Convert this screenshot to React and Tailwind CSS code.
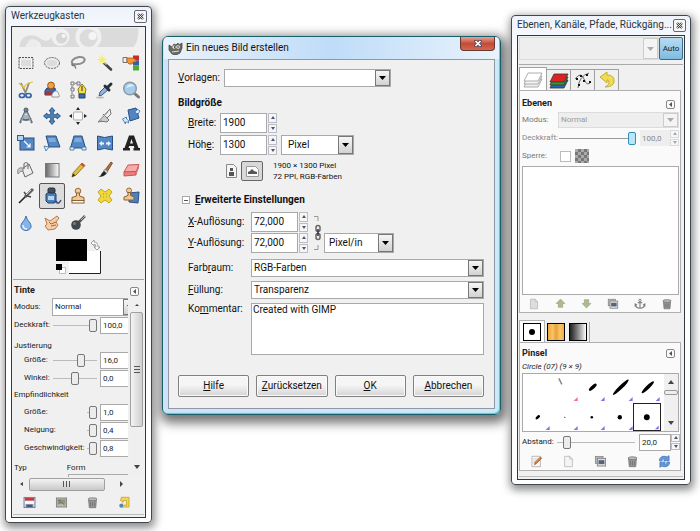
import React from "react";

function Svg({ children, size = 20, className = "" }) {
  return (
    <svg width={size} height={size} viewBox="0 0 20 20" className={className} aria-hidden="true">
      {children}
    </svg>
  );
}

const tools = [
  ["Rechteckige Auswahl", <><rect x="3" y="4.500" width="14" height="11" fill="#dcdcdc" stroke="#555" strokeDasharray="2 1" /><rect x="4.500" y="6" width="11" height="8" fill="none" stroke="#f8f8f8" /></>],
  ["Elliptische Auswahl", <><ellipse cx="10" cy="10" rx="7.500" ry="5.500" fill="#dcdcdc" stroke="#666" strokeDasharray="2 1" /><ellipse cx="10" cy="10" rx="6" ry="4" fill="none" stroke="#f6f6f6" /></>],
  ["Freie Auswahl", <><path d="M5 11C2 9 5 5 11 4c6-.500 7 3 4 5.500-3 2-7 2-10 1.500z" fill="none" stroke="#8c8c8c" strokeWidth="2" /><path d="M5 11c-2 .500-1 2 1 1.500 1-.500 1 2 2 3" fill="none" stroke="#777" strokeWidth="1.300" /></>],
  ["Zauberstab", <><path d="M9 10l7 6.500" stroke="#444" strokeWidth="2.600" strokeLinecap="round" /><path d="M9.500 9.500l2 2" stroke="#ccc" strokeWidth="1.500" /><circle cx="7" cy="7" r="3.500" fill="#f8f7a0" /><path d="M7 2v9M2.500 6.500h9M4 3.500l6 6M10 3.500l-6 6" stroke="#efe95a" strokeWidth=".8" /></>],
  ["Nach Farbe auswählen", <><rect x="12" y="2.500" width="6" height="5" fill="#ce2929" /><rect x="12" y="7.500" width="6" height="5" fill="#315fae" /><rect x="12" y="12.500" width="6" height="5" fill="#4cad32" /><path d="M2 4.500h4v5H2z" fill="#eee" stroke="#555" strokeWidth=".8" /><path d="M6 5h6l3 2v2h-3l-1 2H8L6 9z" fill="#f39637" stroke="#b55a12" strokeWidth=".8" /></>],
  ["Schere", <><path d="M5 3l5 11M13 3l-4 11" stroke="#8b8b80" strokeWidth="1.800" /><path d="M3 3q3 3 5 5 1-5 9-6" fill="none" stroke="#e1bd3b" strokeWidth="1.200" /><ellipse cx="6" cy="15.500" rx="2.600" ry="2" fill="none" stroke="#3765a5" strokeWidth="1.700" /><ellipse cx="12.500" cy="15.500" rx="2.600" ry="2" fill="none" stroke="#3765a5" strokeWidth="1.700" /></>],
  ["Vordergrundauswahl", <><path d="M5 8h8l1 7H3q-1-5 2-7z" fill="#3d65ad" stroke="#283f70" /><circle cx="9" cy="5.500" r="3.400" fill="#eea04a" stroke="#9a5511" /><path d="M4 12h6v3H4z" fill="#a23535" /><path d="M10 17c-1-3 3-7 5-6 1 2 3 4 2 6z" fill="#f3f3f3" stroke="#999" /></>],
  ["Pfade", <><path d="M4 3v14M4 4l5-1" stroke="#777" strokeDasharray="2 1" /><path d="M3 2h3v3H3zM3 8h3v3H3zM3 15h3v3H3zM9 2h3v3H9z" fill="#eee" stroke="#777" /><path d="M11 14l-1-5 4-5 4 5-1 5z" fill="#f4df42" stroke="#8d7718" /><path d="M14 6v5" stroke="#333" /><path d="M11 14h6v4h-6z" fill="#3f6cae" stroke="#26436f" /></>],
  ["Farbpipette", <><path d="M4 16l1-4 6-6 3 3-7 6z" fill="#8eb4df" stroke="#3f5b7b" /><path d="M10 6l4 4M12 8l4-4" stroke="#26313b" strokeWidth="3" strokeLinecap="round" /><ellipse cx="5" cy="17.500" rx="4" ry="1" fill="#bbb" /></>],
  ["Vergrößerung", <><path d="M13 13l4.500 4" stroke="#777" strokeWidth="3" strokeLinecap="round" /><circle cx="9" cy="8.500" r="6.300" fill="#a7cceb" stroke="#8a9aaa" strokeWidth="1.500" /><path d="M5 8c1-4 6-5 8-2-3 0-5 1-8 2z" fill="#dceefb" /></>],
  ["Maßband", <><path d="M10 4L4 17M10 4l6 13M5 12q5 4 10 0" fill="none" stroke="#5f6d79" strokeWidth="2" /><path d="M10 5L5 16M10 5l5 11" stroke="#c6d0d8" strokeWidth=".7" /><circle cx="10" cy="4" r="2" fill="#748594" stroke="#4a5864" /><path d="M8 9h4v4H8z" fill="#a8b5bf" /></>],
  ["Verschieben", <path d="M10 1.500l3 3.500h-1.700v3.700H15V7l3.500 3-3.500 3v-1.700h-3.700V15H13l-3 3.500L7 15h1.700v-3.700H5V13l-3.500-3L5 7v1.700h3.700V5H7z" fill="#5083bd" stroke="#285384" strokeWidth=".9" />],
  ["Ausrichten", <><rect x="5.500" y="6" width="9" height="8" rx="1" fill="#f8f8f8" stroke="#aaa" /><path d="M10 1l2 3H8zM10 19l2-3H8zM1 10l3-2v4zM19 10l-3-2v4z" fill="#222" /></>],
  ["Zuschneiden", <><path d="M3 16L15 3l1 5-7 7z" fill="#eee" stroke="#777" /><path d="M8 8l6 6-2 2-7-1" fill="#ccc" stroke="#777" /><path d="M4 15l9-9" stroke="#999" /></>],
  ["Drehen", <><path d="M7 4l8-2 3 10-9 3z" fill="#4f86c3" stroke="#285080" /><path d="M1.500 13l4-2v2q3 1 2 4-1-1.500-3-1v2z" fill="#d9ebfb" stroke="#366da8" strokeWidth=".8" /><path d="M19 5l-3-2v1q-3 1-1 4l1-1 1 1z" fill="#d9ebfb" stroke="#366da8" strokeWidth=".8" /></>],
  ["Skalieren", <><rect x="4" y="5" width="14" height="12" fill="#5489c5" stroke="#285080" /><rect x="1.500" y="2.500" width="6" height="5" fill="#b8d5ef" stroke="#2c5f9b" /><path d="M8 8l6 6m0-3.500V14h-3.500" fill="none" stroke="#fff" strokeWidth="1.200" /></>],
  ["Scheren", <><path d="M4 3h10l4 11H7z" fill="#5489c5" stroke="#285080" /><path d="M6 5h7l1 4H7z" fill="#7fabdc" /><path d="M2 13l5 1-3 4z" fill="#d9ebfb" stroke="#366da8" strokeWidth=".8" /></>],
  ["Perspektive", <><path d="M6 3h8l3.500 12h-15z" fill="#5489c5" stroke="#285080" /><path d="M7 5h6l1 4H6z" fill="#7fabdc" /><path d="M2 14h4v3H2zM14 14h4v3h-4z" fill="#d9ebfb" stroke="#366da8" strokeWidth=".8" /></>],
  ["Spiegeln", <><path d="M2.500 3l7 1.500 8-1.500v14l-8-1.500-7 1.500z" fill="#5489c5" stroke="#285080" /><path d="M4 10.500l3-2.500v1.500h2v2H7V13zM16 10.500L13 8v1.500h-2v2h2V13z" fill="#e7f3ff" /></>],
  ["Text", <path fillRule="evenodd" d="M8 2.500h5L17.500 15H19v2.500h-6.500V15h1l-.7-2H8.200l-.7 2h1.500v2.500H2V15h1.500zM10.500 6L9 10.500h3z" fill="#222" />],
  ["Füllen", <><path d="M6 9l7-5 4 9-8 4z" fill="#eee" stroke="#666" /><path d="M8 9V4q2-3 4 0v5" fill="none" stroke="#777" strokeWidth="1.200" /><path d="M7 8C2 7 1 10 2 14q1-3 5-3z" fill="#c9c9c9" stroke="#777" strokeWidth=".8" /></>],
  ["Farbverlauf", <><defs><linearGradient id="toolGrad"><stop stopColor="#666" /><stop offset="1" stopColor="#fff" /></linearGradient></defs><rect x="3.500" y="3.500" width="13.500" height="13.500" fill="url(#toolGrad)" stroke="#777" /></>],
  ["Stift", <><path d="M4 17l1-4L14 3l3 2.500L8 15z" fill="#e2bf3b" stroke="#806626" strokeWidth=".8" /><path d="M14 3l3 2.500-1.500 1.600-3-2.500z" fill="#d9463b" /><path d="M4 17l1-3.500 2.500 2z" fill="#3a2a18" /></>],
  ["Pinsel", <><path d="M10 10l6-8 1.500 1L12 12z" fill="#b5713a" stroke="#6b3f1b" strokeWidth=".8" /><path d="M8.500 11l3 2.500 1.500-2-3-2.500z" fill="#ccc" stroke="#666" strokeWidth=".6" /><path d="M3 17q3-1 4-4l2-2 2.500 2.500Q9 17 3 17z" fill="#222" /></>],
  ["Radierer", <><path d="M3 12l4-7 11-.500-3 7.500z" fill="#f6aaaa" stroke="#c65757" /><path d="M3 12l12-.500V15l-12 1z" fill="#ec8080" stroke="#c65757" /><path d="M15 11.500l3-7V8l-3 7z" fill="#dd6d6d" /></>],
  ["Sprühpistole", <><path d="M3 17L14 6" stroke="#222" strokeWidth="1.600" /><path d="M9 11l5-5 3-3" stroke="#5c646b" strokeWidth="3" /><path d="M8 6l3 4 4 1" fill="none" stroke="#444" strokeWidth="1.300" /><path d="M10 9l5-5" stroke="#ccc" /></>],
  ["Tinte", <><path d="M4 8l3-2h5l2 2v7l-2 2H6l-2-2z" fill="#497fbb" stroke="#26415f" /><rect x="6" y="2" width="7" height="5" rx="1.500" fill="#444e58" stroke="#222c35" /><path d="M6 10h6v4H6z" fill="#b6d5ee" /><path d="M12 17q3-3 3 0 2 1 4-3" fill="none" stroke="#263f78" strokeWidth="1.300" /></>],
  ["Klonen", <><circle cx="10" cy="5" r="2.800" fill="#f1c995" stroke="#9b6c39" /><path d="M8.500 7h3v3l4.500 1.500V15H4v-3.500L8.500 10z" fill="#efc793" stroke="#8b6135" /><rect x="4" y="14.500" width="12" height="2.500" fill="#fff" stroke="#8b6135" /></>],
  ["Heilen", <><path d="M3 6l3-3 4 3 4-3 3 3-3 4 3 4-3 3-4-3-4 3-3-3 3-4z" fill="#f0d73c" stroke="#c3a71c" strokeLinejoin="round" /><path d="M8 8h1M11 8h1M8 11h1M11 11h1" stroke="#b39612" /></>],
  ["Perspektivisches Klonen", <><path d="M8 7l10-1-1 11-9-1z" fill="#4d81bd" stroke="#285080" /><circle cx="8" cy="4.500" r="2.500" fill="#f1c995" stroke="#9b6c39" /><path d="M7 6.500h2.500v3L13 11v3H3v-3l4-1.500z" fill="#efc793" stroke="#8b6135" /></>],
  ["Weichzeichnen", <><path d="M10 3q1 4 4 7c3 5-1 7.500-4 7.500S3 15 6 10q3-3 4-7z" fill="#86b4e8" stroke="#4471a8" /><path d="M7 12q0 4 4 4" fill="none" stroke="#e2f1ff" strokeWidth="1.500" /></>],
  ["Verschmieren", <><path d="M3 5l5 3 7-5 2 2-3 4 2 3-3 4-7 1-3-4 2-2z" fill="#f5cda7" stroke="#b57a50" /><path d="M9 11l5-2M9 13l5-1M7 9l2 2" stroke="#a8663f" /></>],
  ["Abwedeln", <><path d="M10 10l7-7" stroke="#555" strokeWidth="2.500" /><path d="M13 7l4-4" stroke="#bbb" /><circle cx="8" cy="12" r="4.800" fill="#42484d" /><circle cx="6.500" cy="10.500" r="1.500" fill="#777f85" /></>],
];

const shapes = {
  trash: <><path d="M4 6h12l-1 12H5z" fill="#999" stroke="#666" /><ellipse cx="10" cy="5" rx="7" ry="2.300" fill="#bbb" stroke="#666" /><path d="M7 9v7M10 9v7M13 9v7" stroke="#666" /></>,
  page: <path d="M4 2h8l4 4v12H4zM12 2v4h4" fill="#f4f4f4" stroke="#aaa" />,
  pageMuted: <path d="M4 2h8l4 4v12H4zM12 2v4h4" fill="#ddd" stroke="#aaa" />,
  up: <path d="M10 2l8 8h-4v7H6v-7H2z" fill="#aabb8d" stroke="#8c9c72" />,
  down: <path d="M10 18l8-8h-4V3H6v7H2z" fill="#aabb8d" stroke="#8c9c72" />,
  copy: <><rect x="2" y="2" width="12" height="11" fill="#bbb" stroke="#777" /><rect x="5" y="5" width="13" height="12" fill="#ddd" stroke="#666" /><path d="M7 8h9v6H7z" fill="#56647a" /></>,
  anchor: <><circle cx="10" cy="4" r="2" fill="none" stroke="#777" strokeWidth="1.500" /><path d="M10 6v11M6 8h8M2 11q1 6 8 6 7 0 8-6M2 14v-4l3 2M18 14v-4l-3 2" fill="none" stroke="#777" strokeWidth="1.800" /></>,
  edit: <><path d="M3 2h13v16H3z" fill="#f8f8f8" stroke="#999" /><path d="M5 6h8M5 9h5M5 12h4" stroke="#bbb" /><path d="M7 15l1-4 8-8 2 2-8 8z" fill="#e77c32" stroke="#9a4c1c" /></>,
  refresh: <><path d="M2 9Q3 1 11 2l3 1 3-2v8H9l2-3q-4-1-5 3zM18 11q-1 8-9 7l-3-1-3 2v-8h8l-2 3q4 1 5-3z" fill="#629bdf" stroke="#2e63ad" /></>,
  save: <><rect x="1.500" y="2" width="17" height="16" fill="#c8cdd9" stroke="#4b5c85" /><path d="M3 3h14v4H3z" fill="#d03636" /><path d="M3 8h14v4H3z" fill="#fff" /><path d="M5 13h10v4H5z" fill="#445982" /></>,
  image: <><rect x="2" y="3" width="16" height="14" fill="#b9b9a9" stroke="#666" /><path d="M4 5h12v7H4z" fill="#96957b" /><path d="M5 13l4-4 6 5M5 7h4" stroke="#555" fill="none" /></>,
  reset: <><path d="M5 2h12v15H6l-3-4 4-1-1 2h7V7H8v3L3 6l2-2z" fill="#f4d54c" stroke="#b6951c" /><circle cx="5" cy="15" r="3" fill="#4f82c6" /></>,
};

function IconButton({ name, label, size = 13 }) {
  return (
    <button type="button" aria-label={label} className="flex items-center justify-center">
      <Svg size={size}>{shapes[name]}</Svg>
    </button>
  );
}

function Collapse() {
  return (
    <button type="button" aria-label="Reiter konfigurieren" className="flex size-[9px] items-center justify-center rounded-xs border border-[#888] bg-[#fafafa]">
      <svg width="5" height="5" viewBox="0 0 5 5" aria-hidden="true"><path d="M4 0v5L1 2.500z" fill="#555" /></svg>
    </button>
  );
}

function CloseBox() {
  return (
    <button type="button" aria-label="Schließen" className="flex size-[13px] shrink-0 items-center justify-center rounded-xs border border-[#667] bg-[#f7f7f7]">
      <svg width="7" height="7" viewBox="0 0 7 7" aria-hidden="true"><path d="M1 1l5 5M6 1L1 6" stroke="#444" strokeWidth="2.400" /><path d="M1 1l5 5M6 1L1 6" stroke="#fff" strokeWidth=".8" /></svg>
    </button>
  );
}

function ToolWindow({ title, className, children }) {
  return (
    <section className={`flex flex-col rounded-sm border border-[#41474f] bg-gradient-to-b from-[#eef3fb] to-white to-10% px-[5px] pb-1 shadow-[1px_3px_9px_2px_rgba(0,0,0,0.45)] ${className}`}>
      <header className="-mr-px flex h-[19px] items-center justify-between">
        <h1 className="text-[10px] whitespace-nowrap text-[#2a3442]">{title}</h1>
        <CloseBox />
      </header>
      <div className="border border-[#33383f] bg-[#f0f0f0]">{children}</div>
    </section>
  );
}

function Select({ id, value, className = "", muted = false, label }) {
  return (
    <span className={`relative flex border ${muted ? "border-[#dcdcdc] bg-[#eeeeee] text-[#999]" : "border-[#a9a9a9] bg-white"} ${className}`}>
      <select id={id} aria-label={label} disabled={muted} defaultValue={value} className="w-full min-w-0 appearance-none bg-transparent pl-0.5 outline-none">
        <option>{value}</option>
      </select>
      <span className={`pointer-events-none absolute inset-y-0 right-0 flex w-[15px] items-center justify-center border ${muted ? "border-[#ccc] bg-[#f4f4f4]" : "border-[#777] bg-gradient-to-b from-[#f6f6f6] to-[#d2d2d2]"}`}>
        <svg width="7" height="4" viewBox="0 0 7 4" aria-hidden="true"><path d="M0 0h7L3.500 4z" fill={muted ? "#aaa" : "#000"} /></svg>
      </span>
    </span>
  );
}

function Stepper({ name }) {
  return (
    <span className="flex h-full w-[9px] flex-col gap-px">
      {["M0 3h4L2 0z", "M0 0h4L2 3z"].map((d, i) => (
        <button key={d} type="button" aria-label={`${name} ${i ? "verringern" : "erhöhen"}`} className="flex flex-1 items-center justify-center border border-[#bcbcc4] bg-[#f6f6f6]">
          <svg width="4" height="3" viewBox="0 0 4 3" aria-hidden="true"><path d={d} fill="#4a5578" /></svg>
        </button>
      ))}
    </span>
  );
}

function Field({ id, value }) {
  return (
    <span className="flex h-5 gap-px">
      <input id={id} defaultValue={value} className="w-[47px] border border-[#a9a9a9] bg-white pl-0.5 outline-none" />
      <Stepper name={id} />
    </span>
  );
}

function Range({ id, value, blue = false, label }) {
  return (
    <input
      id={id}
      type="range"
      aria-label={label}
      defaultValue={value}
      className={`h-3.5 w-full min-w-0 appearance-none bg-transparent [&::-webkit-slider-runnable-track]:h-px [&::-webkit-slider-thumb]:-mt-1.5 [&::-webkit-slider-thumb]:h-[13px] [&::-webkit-slider-thumb]:w-2 [&::-webkit-slider-thumb]:appearance-none [&::-webkit-slider-thumb]:rounded-xs [&::-webkit-slider-thumb]:border ${blue ? "[&::-webkit-slider-runnable-track]:bg-[#999] [&::-webkit-slider-thumb]:border-[#2f8fb5] [&::-webkit-slider-thumb]:bg-[#b9e6f8]" : "[&::-webkit-slider-runnable-track]:bg-[#bbb] [&::-webkit-slider-thumb]:border-[#777] [&::-webkit-slider-thumb]:bg-[#ececec]"}`}
    />
  );
}

function SliderRow({ id, label, slider, value, indent = false, wide = false, short = false }) {
  return (
    <div className="flex h-[18px] items-center">
      <label htmlFor={id} className={`shrink-0 whitespace-nowrap ${wide ? "w-[73px]" : "w-[39px]"} ${indent ? "pl-2.5" : ""}`}>{label}</label>
      <span className={`flex shrink-0 ${short ? "w-2.5" : "w-11"}`}><Range id={id} value={slider} /></span>
      <input aria-label={`${label} Wert`} defaultValue={value} className="ml-[3px] h-[17px] w-10 shrink-0 border border-[#a9a9a9] bg-white pl-0.5 outline-none" />
    </div>
  );
}

function Arrow({ d, label, className }) {
  return (
    <button type="button" aria-label={label} className={`flex shrink-0 items-center justify-center ${className}`}>
      <svg width="6" height="6" viewBox="0 0 6 6" aria-hidden="true"><path d={d} fill="#444" /></svg>
    </button>
  );
}

function Toolbox() {
  return (
    <ToolWindow title="Werkzeugkasten" className="mt-1.5 w-[147px] shrink-0">
      <div className="flex flex-col px-px">
        <svg viewBox="0 0 128 23" className="h-[23px] w-full" aria-hidden="true">
          <path d="M5 20C6 7 18 6 25 11q9 7 14-4L42 1h82q0 14-5 19H27q-1-6-7-7-7 0-9 7z" fill="#dbdbdb" />
          <circle cx="46" cy="10" r="9" fill="#f0f0f0" /><circle cx="47" cy="11" r="5.500" fill="#d6d6d6" /><circle cx="49" cy="9" r="2" fill="#f5f5f5" />
          <circle cx="74" cy="10" r="13" fill="#f0f0f0" /><circle cx="74" cy="11" r="9" fill="#dbdbdb" /><circle cx="78" cy="9" r="4" fill="#f5f5f5" />
          <circle cx="18" cy="17" r="5" fill="#ececec" />
          <path d="M0 20h128v3H0z" fill="#f0f0f0" />
        </svg>
        <div className="grid h-[186px] grid-cols-5 grid-rows-7">
          {tools.map(([label, art]) => (
            <button key={label} type="button" aria-label={label} className={`flex items-center justify-center ${label === "Tinte" ? "rounded-xs border border-[#555] bg-[#dcdcdc]" : ""}`}>
              <Svg size={20}>{art}</Svg>
            </button>
          ))}
        </div>
        <div className="mx-auto flex h-[43px] items-start pt-[3px]">
          <svg width="46" height="36" viewBox="0 0 46 36" role="img" aria-label="Vorder- und Hintergrundfarbe">
            <path d="M13 12h32v22H13z" fill="#fff" /><path d="M13 34.500h31.500V12" fill="none" stroke="#222" />
            <path d="M31 0h13v12H31zM0 23h13v13H0z" fill="#f0f0f0" /><path d="M0 0h31v22H0z" fill="#000" />
            <path d="M3.500 28.500h6v6h-6z" fill="#fff" stroke="#bbb" /><path d="M0 25h6v6H0z" fill="#000" />
            <path d="M35 4l3-3v2q4 0 4 5h2l-3 3-3-3h2q0-3-2-3v2z" fill="#fff" stroke="#888" strokeWidth=".8" />
          </svg>
        </div>
        <div className="border-t border-[#a5a5a5] px-px text-[8px]">
          <div className="flex h-[18px] items-center justify-between pt-1 pr-1">
            <h2 className="text-[9px] font-bold">Tinte</h2>
            <Collapse />
          </div>
          <div className="flex h-[179px]">
            <div className="min-w-0 flex-1 overflow-hidden">
              <div className="flex w-[124px] items-center">
                <label htmlFor="ink-mode" className="w-[38px] shrink-0">Modus:</label>
                <Select id="ink-mode" value="Normal" className="h-[18px] w-[87px] shrink-0" />
              </div>
              <SliderRow id="opacity" label="Deckkraft:" slider="100" value="100,0" />
              <h3 className="flex h-[17px] items-end">Justierung</h3>
              <SliderRow id="size" label="Größe:" slider="67" value="16,0" indent />
              <SliderRow id="angle" label="Winkel:" slider="50" value="0,0" indent />
              <h3 className="flex h-4 items-center">Empfindlichkeit</h3>
              <SliderRow id="sens-size" label="Größe:" slider="100" value="1,0" indent wide short />
              <SliderRow id="sens-tilt" label="Neigung:" slider="100" value="0,4" indent wide short />
              <SliderRow id="sens-speed" label="Geschwindigkeit:" slider="100" value="0,8" indent wide short />
              <div className="flex h-4 items-end gap-10"><h3>Typ</h3><h3>Form</h3></div>
              <div className="flex items-start gap-6 pt-px pl-[30px]"><span className="h-px w-1.5 rounded bg-[#444]" /><span className="h-4 w-20 shrink-0 border border-[#aaa]" /></div>
            </div>
            <div className="ml-0.5 flex w-[13px] flex-col bg-[#efefef]">
              <Arrow label="Nach oben" d="M1 4l2-2 2 2z" className="h-3.5" />
              <div className="flex h-[115px] flex-col items-center justify-center gap-px rounded-xs border border-[#a0a0a0] bg-gradient-to-r from-[#f4f4f4] to-[#cfcfcf]">
                {[0, 1, 2].map((i) => <span key={i} className="h-px w-1.5 border-t border-[#555] pt-px" />)}
              </div>
              <Arrow label="Nach unten" d="M0 1h6L3 5z" className="mt-auto h-5" />
            </div>
          </div>
          <div className="flex h-3.5 items-center pr-[18px]">
            <Arrow label="Nach links" d="M4 1L1 3l3 2z" className="w-[15px]" />
            <div className="flex h-[13px] w-[76px] items-center justify-center gap-px rounded-xs border border-[#a0a0a0] bg-gradient-to-b from-[#f4f4f4] to-[#c9c9c9]">
              {[0, 1, 2].map((i) => <span key={i} className="h-1.5 w-px border-l border-[#555] pl-px" />)}
            </div>
            <Arrow label="Nach rechts" d="M2 0l3 3-3 3z" className="ml-auto w-2" />
          </div>
          <div className="flex h-[23px] items-center justify-between pr-3 pl-[9px]">
            <IconButton name="save" label="Speichern" />
            <IconButton name="image" label="Wiederherstellen" />
            <IconButton name="trash" label="Löschen" />
            <IconButton name="reset" label="Zurücksetzen" />
          </div>
        </div>
        <div className="h-[3px] border-t border-[#bbb]" />
      </div>
    </ToolWindow>
  );
}

function U({ children }) {
  return <span className="underline underline-offset-1">{children}</span>;
}

function DialogButton({ children }) {
  return (
    <button type="button" className="h-[22px] flex-1 rounded-xs border border-[#808080] bg-gradient-to-b from-[#f5f5f5] from-45% to-[#d4d4d4] shadow-[inset_0_0_0_1px_#fafafa]">
      {children}
    </button>
  );
}

function NewImageDialog() {
  return (
    <section role="dialog" aria-labelledby="dialog-title" className="mt-9 flex min-w-0 flex-1 flex-col rounded-md border border-[#17606a] bg-gradient-to-r from-[#cfe2f7] via-[#cfe5fb] to-[#cdeaf8] px-[5px] pb-[5px] shadow-[inset_-1px_-1px_1px_#54c8dc,2px_4px_11px_4px_rgba(0,0,0,0.55)]">
      <header className="-mx-1 flex h-[22px] items-start justify-between rounded-t bg-gradient-to-r from-[#eaf3fb] via-[#bfdcf8] to-[#e9f3fb] pr-1 pl-1">
        <div className="flex h-full items-center gap-[3px]">
          <svg width="15" height="13" viewBox="0 0 15 13" aria-hidden="true">
            <path d="M1 3l3 2 2-3 2 1 2-2 1 2 3-2v5l-2 5-4 2-4-1-3-4z" fill="#6b6a61" stroke="#3c3c38" strokeWidth=".7" />
            <circle cx="6" cy="5" r="1.600" fill="#fff" /><circle cx="10" cy="5" r="1.800" fill="#fff" /><circle cx="6.500" cy="5" r=".8" /><circle cx="10" cy="5" r=".8" />
            <path d="M4 10l7-1" stroke="#ddd" />
          </svg>
          <h1 id="dialog-title" className="text-[10px] text-[#111]">Ein neues Bild erstellen</h1>
        </div>
        <button type="button" aria-label="Schließen" className="flex h-3.5 w-[35px] items-center justify-center rounded-b border border-t-0 border-[#6b3531] bg-gradient-to-b from-[#e2a395] via-[#c54a37] to-[#cf6a50]">
          <svg width="8" height="7" viewBox="0 0 8 7" aria-hidden="true"><path d="M1 0l6 7M7 0L1 7" stroke="#4c4560" strokeWidth="3" /><path d="M1.500 1l5 5M6.500 1l-5 5" stroke="#fff" strokeWidth="1.700" /></svg>
        </button>
      </header>
      <form className="flex flex-col border border-[#8d99a5] bg-[#f0f0f0] px-[9px] pt-[9px] pb-[11px] text-[10px] text-[#111]" onSubmit={(e) => e.preventDefault()}>
        <div className="flex items-center">
          <label htmlFor="template" className="w-[46px]"><U>V</U>orlagen:</label>
          <Select id="template" value="" className="h-[18px] w-[167px]" />
        </div>
        <h2 className="mt-2 flex h-4 items-center font-bold">Bildgröße</h2>
        <div className="mt-0.5 flex items-center">
          <label htmlFor="Breite" className="w-[42px] pl-2.5"><U>B</U>reite:</label>
          <Field id="Breite" value="1900" />
        </div>
        <div className="mt-0.5 flex items-center">
          <label htmlFor="Höhe" className="w-[42px] pl-2.5">Höh<U>e</U>:</label>
          <Field id="Höhe" value="1300" />
          <Select label="Einheit" value="Pixel" className="ml-1 h-5 w-[73px] pl-1" />
        </div>
        <div className="mt-1.5 flex h-5 items-center pl-[43px]">
          <button type="button" aria-label="Hochformat" className="flex size-5 items-center justify-center">
            <svg width="11" height="14" viewBox="0 0 11 14" aria-hidden="true"><path d="M.5.500h7l3 3v10H.5z" fill="#f5f5f5" stroke="#888" /><path d="M4 4h3v3H4zM3 8h5v4H3z" fill="#555" /></svg>
          </button>
          <button type="button" aria-label="Querformat" className="flex h-5 w-[22px] items-center justify-center rounded-xs border border-[#666] bg-[#d8d8d8]">
            <svg width="13" height="11" viewBox="0 0 13 11" aria-hidden="true"><path d="M.5.500h9l3 3v7H.5z" fill="#fafafa" stroke="#999" /><path d="M2 8V6l2-1 2-2 2 2 3 1v2z" fill="#555" /></svg>
          </button>
          <p className="ml-2.5 text-[8px] leading-[11px] whitespace-nowrap">1900 × 1300 Pixel<br />72 PPI, RGB-Farben</p>
        </div>
        <h2 className="mt-[11px] flex h-4 items-center gap-[5px] pl-1 font-bold">
          <button type="button" aria-label="Einklappen" className="flex size-2 items-center justify-center border border-[#aaa] bg-white"><span className="h-px w-1 bg-[#555]" /></button>
          <span><U>E</U>rweiterte Einstellungen</span>
        </h2>
        <div className="mt-1 flex">
          <div className="flex flex-col gap-px">
            <div className="flex items-center">
              <label htmlFor="X-Auflösung" className="w-[73px] pl-2.5"><U>X</U>-Auflösung:</label>
              <Field id="X-Auflösung" value="72,000" />
            </div>
            <div className="flex items-center">
              <label htmlFor="Y-Auflösung" className="w-[73px] pl-2.5"><U>Y</U>-Auflösung:</label>
              <Field id="Y-Auflösung" value="72,000" />
            </div>
          </div>
          <button type="button" aria-label="Auflösungen verketten" className="ml-1">
            <svg width="10" height="41" viewBox="0 0 10 41" aria-hidden="true">
              <path d="M2 4.500h4V9M2 37.500h4V33" fill="none" stroke="#999" />
              <rect x="4" y="13.500" width="4" height="6" rx="2" fill="none" stroke="#666" strokeWidth="1.500" /><rect x="4" y="21.500" width="4" height="6" rx="2" fill="none" stroke="#666" strokeWidth="1.500" /><path d="M6 17v7" stroke="#333" strokeWidth="1.500" />
            </svg>
          </button>
          <Select label="Auflösungseinheit" value="Pixel/in" className="mt-auto ml-0.5 h-5 w-[70px] pl-0.5" />
        </div>
        <div className="mt-1.5 mr-px flex items-center">
          <label htmlFor="colorspace" className="w-[73px] pl-2.5">Farb<U>r</U>aum:</label>
          <Select id="colorspace" value="RGB-Farben" className="h-[18px] flex-1" />
        </div>
        <div className="mt-1 mr-px flex items-center">
          <label htmlFor="fill" className="w-[73px] pl-2.5"><U>F</U>üllung:</label>
          <Select id="fill" value="Transparenz" className="h-[18px] flex-1" />
        </div>
        <div className="mt-1 mr-px flex items-start">
          <label htmlFor="comment" className="w-[73px] pl-2.5">Ko<U>m</U>mentar:</label>
          <textarea id="comment" defaultValue="Created with GIMP" className="h-13 flex-1 resize-none border border-[#a9a9a9] bg-white px-px outline-none" />
        </div>
        <div className="mt-5 mr-px flex gap-[7px]">
          <DialogButton><U>H</U>ilfe</DialogButton>
          <DialogButton><U>Z</U>urücksetzen</DialogButton>
          <DialogButton><U>O</U>K</DialogButton>
          <DialogButton><U>A</U>bbrechen</DialogButton>
        </div>
      </form>
    </section>
  );
}

function LayerStack({ colors, stroke }) {
  return (
    <Svg size={20}>
      {colors.map((c, i) => <path key={c} d="M5 3h14l-4 8H1z" transform={`translate(0 ${7 - i * 3})`} fill={c} stroke={stroke} strokeWidth=".8" />)}
    </Svg>
  );
}

const strokes = [null, "pen", "e1", "e2", "e3", "s0", "d1", "d2", "d3", "d4"];
const brushArt = {
  pen: <path d="M8 4l3 6" stroke="#888" strokeWidth="1.500" />,
  e1: <ellipse cx="15" cy="13" rx="5" ry="1.800" transform="rotate(-42 15 13)" />,
  e2: <ellipse cx="15" cy="13" rx="11" ry="1.900" transform="rotate(-44 15 13)" />,
  e3: <ellipse cx="15" cy="13" rx="8.500" ry="1.900" transform="rotate(-44 15 13)" />,
  s0: <ellipse cx="15" cy="14" rx="2.800" ry="1.500" transform="rotate(-42 15 14)" />,
  d1: <circle cx="14" cy="14" r=".6" />,
  d2: <circle cx="14" cy="14" r="1.300" />,
  d3: <circle cx="14" cy="14" r="2.200" />,
  d4: <circle cx="14" cy="14" r="3.200" />,
};

function Docks() {
  return (
    <ToolWindow title="Ebenen, Kanäle, Pfade, Rückgäng..." className="mt-[15px] w-[180px] shrink-0">
      <div className="flex flex-col px-px pt-px text-[8px]">
        <div className="flex h-7 items-start justify-between border-b border-[#aaa]">
          <Select label="Bild" value="" muted className="h-[23px] w-[140px]" />
          <button type="button" className="h-[23px] w-6 rounded-xs border border-[#3c6b8e] bg-gradient-to-b from-[#b8dcf3] to-[#7fbae0] text-[8px] text-[#123]">Auto</button>
        </div>
        <div className="flex h-[25px] items-end pt-0.5" role="tablist">
          <button type="button" role="tab" aria-selected="true" aria-label="Ebenen" className="flex h-[23px] w-7 items-center justify-center border border-b-0 border-[#a0a0a0] bg-white"><LayerStack colors={["#eee", "#f4f4f4", "#fff"]} stroke="#999" /></button>
          <button type="button" role="tab" aria-label="Kanäle" className="flex h-[21px] w-6 items-center justify-center border border-b-0 border-l-0 border-[#a0a0a0]"><LayerStack colors={["#2d63b5", "#3a9a2e", "#de2222"]} stroke="#333" /></button>
          <button type="button" role="tab" aria-label="Pfade" className="flex h-[21px] w-6 items-center justify-center border border-b-0 border-l-0 border-[#a0a0a0]">
            <Svg><path d="M2 9q6-8 9 0t7 3M5 18Q6 6 16 3" fill="none" stroke="#666" /><path d="M3 8h2v2H3zM7 5h2v2H7zM13 4h2v2h-2zM10 10h2v2h-2zM16 11h2v2h-2zM5 14h2v2H5z" fill="#111" /></Svg>
          </button>
          <button type="button" role="tab" aria-label="Rückgängig" className="flex h-[21px] w-6 items-center justify-center border border-b-0 border-l-0 border-[#a0a0a0]">
            <Svg><path d="M3 7l7-5v3q8 0 7 7-1 5-9 5 6-3 3-7H10v3z" fill="#f0dc50" stroke="#c4ad3c" /></Svg>
          </button>
        </div>
        <div className="mr-0.5 border border-[#b0b0b0] bg-[#fafafa] pr-px pl-0.5">
          <div className="mt-[5px] flex h-4 items-center justify-between pr-1">
            <h2 className="text-[9px] font-bold">Ebenen</h2><Collapse />
          </div>
          <div className="flex h-4 items-center text-[#777]">
            <label htmlFor="layer-mode" className="w-9 shrink-0">Modus:</label>
            <Select id="layer-mode" value="Normal" muted className="h-4 min-w-0 flex-1" />
          </div>
          <div className="mt-px flex h-[18px] items-center text-[#888]">
            <label htmlFor="layer-opacity" className="w-[37px] shrink-0">Deckkraft:</label>
            <span className="flex min-w-0 flex-1"><Range id="layer-opacity" value="100" blue /></span>
            <input aria-label="Deckkraft Wert" defaultValue="100,0" className="ml-1 h-4 w-[30px] bg-[#eee] pl-0.5 outline-none" />
            <span className="h-4 w-[9px] opacity-50"><Stepper name="Deckkraft" /></span>
          </div>
          <div className="flex h-[18px] items-center text-[#777]">
            <label htmlFor="lock" className="w-[38px]">Sperre:</label>
            <input id="lock" type="checkbox" className="size-[11px] appearance-none border border-[#bbb] bg-white" />
            <span className="ml-1 size-3.5 bg-[#999] bg-[conic-gradient(#777_25%,#aaa_0_50%,#777_0_75%,#aaa_0)] bg-[length:6px_6px]" />
          </div>
          <div className="mt-px h-[129px] border border-[#aaa] bg-white" />
          <div className="flex h-[17px] items-center justify-between px-1.5">
            <IconButton name="pageMuted" label="Neue Ebene" size={12} />
            <IconButton name="up" label="Ebene anheben" size={11} />
            <IconButton name="down" label="Ebene absenken" size={11} />
            <IconButton name="copy" label="Ebene duplizieren" size={12} />
            <IconButton name="anchor" label="Ebene verankern" size={12} />
            <IconButton name="trash" label="Ebene löschen" size={12} />
          </div>
        </div>
        <div className="mt-[7px] flex h-[22px] items-end" role="tablist">
          <button type="button" role="tab" aria-selected="true" aria-label="Pinsel" className="flex h-[22px] w-[26px] items-center justify-center border border-b-0 border-[#b0b0b0] bg-white">
            <span className="flex size-[18px] items-center justify-center border border-black bg-white"><span className="size-1.5 rounded-full bg-black" /></span>
          </button>
          <button type="button" role="tab" aria-label="Muster" className="flex h-5 w-[22px] items-center justify-center"><span className="size-[18px] border border-black bg-[linear-gradient(90deg,#eda83d,#f7c667_30%,#e9a038_50%,#f8c668_75%,#f0ad43)]" /></button>
          <button type="button" role="tab" aria-label="Farbverläufe" className="flex h-5 w-[23px] items-center justify-center border-r border-[#aaa]"><span className="size-[18px] border border-black bg-gradient-to-r from-[#222] to-white" /></button>
        </div>
        <div className="mr-0.5 border border-[#b0b0b0] bg-[#fafafa] pr-px pl-0.5">
          <div className="mt-[3px] flex h-[15px] items-center justify-between pr-1">
            <h2 className="text-[9px] font-bold">Pinsel</h2><Collapse />
          </div>
          <p className="flex h-3 items-center italic">Circle (07) (9 × 9)</p>
          <div className="flex h-[59px] border border-[#aaa] bg-white">
            <div className="grid flex-1 grid-cols-5 grid-rows-2">
              {strokes.map((s, i) => (
                <button key={i} type="button" aria-label={`Pinsel ${i + 1}`} className={`flex items-center justify-center ${s === "d4" ? "border border-[#222]" : ""}`}>
                  <svg viewBox="0 0 28 28" className="size-full" aria-hidden="true">
                    {s && brushArt[s]}
                    {i > 0 && <path d="M27 23v4h-4z" fill={s === "pen" ? "#f66d8e" : "#7c73ee"} />}
                  </svg>
                </button>
              ))}
            </div>
            <div className="ml-[3px] flex w-3.5 flex-col items-stretch bg-[#f0f0f0]">
              <Arrow label="Nach oben" d="M0 5h6L3 1z" className="h-4" />
              <span className="h-[5px] rounded-xs border border-[#999] bg-[#eee]" />
              <Arrow label="Nach unten" d="M0 1h6L3 5z" className="mt-auto h-4" />
            </div>
          </div>
          <div className="flex h-5 items-center">
            <label htmlFor="spacing" className="w-[35px] shrink-0">Abstand:</label>
            <span className="flex min-w-0 flex-1"><Range id="spacing" value="8" /></span>
            <input aria-label="Abstand Wert" defaultValue="20,0" className="ml-1 h-[17px] w-8 border border-[#a9a9a9] bg-white pl-0.5 outline-none" />
            <span className="h-4 w-2"><Stepper name="Abstand" /></span>
          </div>
          <div className="flex h-[18px] items-center justify-between px-2">
            <IconButton name="edit" label="Pinsel bearbeiten" />
            <IconButton name="page" label="Neuer Pinsel" />
            <IconButton name="copy" label="Pinsel duplizieren" />
            <IconButton name="trash" label="Pinsel löschen" />
            <IconButton name="refresh" label="Aktualisieren" />
          </div>
        </div>
        <div className="mt-[5px] h-[3px] border-t border-[#bbb]" />
      </div>
    </ToolWindow>
  );
}

export default function App() {
  return (
    <main className="flex min-h-screen min-w-[640px] items-start gap-2.5 overflow-hidden bg-white pr-[9px] pb-2 pl-[5px] font-['Roboto','Open_Sans',sans-serif] leading-tight text-[#222]">
      <Toolbox />
      <NewImageDialog />
      <Docks />
    </main>
  );
}
